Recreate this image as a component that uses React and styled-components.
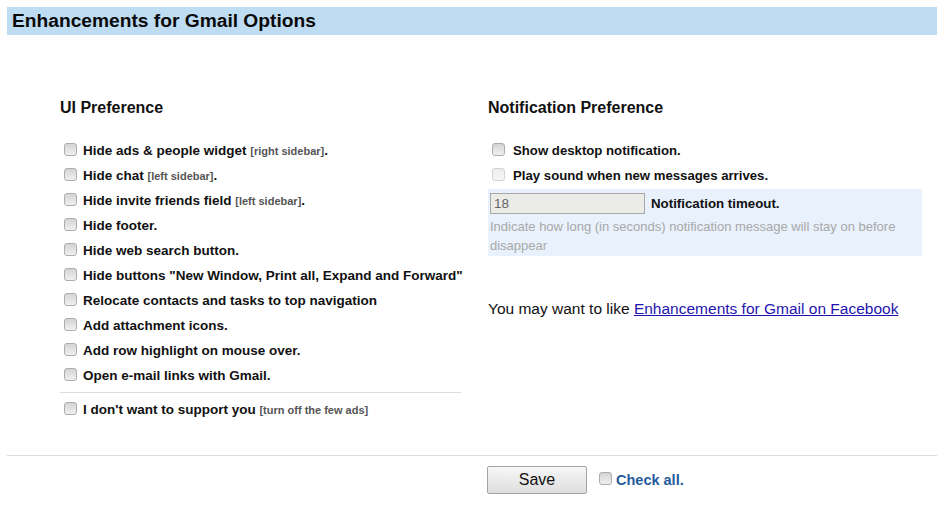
import React from "react";
import styled, { createGlobalStyle } from "styled-components";

const Global = createGlobalStyle`
  html, body { margin: 0; padding: 0; background: #fff; }
  body { font-family: "Liberation Sans", Arial, sans-serif; color: #111; }
`;

const Page = styled.div`
  padding: 7px 0 0 7px;
  width: 930px;
`;

const Header = styled.h1`
  margin: 0;
  height: 28px;
  background: #bedcf2;
  display: flex;
  align-items: center;
  padding-left: 5px;
  font-size: 19.2px;
  font-weight: bold;
  color: #0a0a0a;
`;

const Columns = styled.div`
  display: flex;
  padding: 63px 0 0 53px;
  gap: 27px;
`;

const Column = styled.div`
  width: ${(p) => p.$w}px;
  display: flex;
  flex-direction: column;
`;

const Heading = styled.h2`
  margin: 0 0 21px;
  font-size: 16px;
  line-height: 19px;
  font-weight: bold;
  color: #111;
`;

const Row = styled.label`
  display: flex;
  align-items: center;
  height: 25px;
  font-size: ${(p) => p.$size || 13.5}px;
  font-weight: bold;
  color: #111;
  gap: ${(p) => p.$gap || 6}px;
  white-space: nowrap;
`;

const Check = styled.input.attrs({ type: "checkbox" })`
  appearance: none;
  -webkit-appearance: none;
  width: 13px;
  height: 13px;
  margin: 0 0 3px 4px;
  border: 1px solid #adadad;
  border-radius: 3px;
  background: linear-gradient(#d4d4d4, #f0f0f0);
  box-sizing: border-box;
  flex: none;
  &:disabled {
    border-color: #d2d2d2;
    background: linear-gradient(#ececec, #f7f7f7);
  }
`;

const Note = styled.span`
  font-size: 11px;
  color: #555;
`;

const Rule = styled.hr`
  border: 0;
  border-top: 1px solid #dcdcdc;
  margin: 4px 0 4px;
  width: 401px;
`;

const TimeoutBox = styled.div`
  margin-top: 1px;
  background: #e8f1fc;
  padding: 4px 2px 1px;
`;

const TimeoutLine = styled.div`
  display: flex;
  align-items: center;
  gap: 6px;
  font-size: 13.3px;
  font-weight: bold;
`;

const NumberInput = styled.input`
  width: 155px;
  height: 21px;
  box-sizing: border-box;
  border: 1px solid #a9a9a9;
  background: #ebebe8;
  color: #666;
  font-family: "Liberation Sans", Arial, sans-serif;
  font-size: 13.5px;
  padding: 0 3px;
  margin: 0;
`;

const Hint = styled.p`
  margin: 3px 0 0;
  font-size: 13px;
  line-height: 19px;
  color: #a8a8a8;
`;

const Promo = styled.p`
  margin: 44px 0 0;
  font-size: 15.5px;
  line-height: 18px;
  color: #111;
`;

const Link = styled.a`
  color: #1f14b0;
  text-decoration: underline;
`;

const Footer = styled.div`
  margin-top: 33px;
  border-top: 1px solid #dcdcdc;
  display: flex;
  align-items: center;
  padding: 10px 0 0 480px;
  gap: 6px;
`;

const SaveButton = styled.button`
  width: 100px;
  height: 28px;
  border: 1px solid #a3a3a3;
  border-radius: 2px;
  background: linear-gradient(#f7f7f7, #dedede);
  font-family: "Liberation Sans", Arial, sans-serif;
  font-size: 16px;
  color: #111;
  margin-right: 2px;
`;

const CheckAll = styled.label`
  display: flex;
  align-items: center;
  gap: 4px;
  font-size: 14.5px;
  font-weight: bold;
  color: #1f5c9c;
`;

const uiItems = [
  ["Hide ads & people widget ", "[right sidebar]", "."],
  ["Hide chat ", "[left sidebar]", "."],
  ["Hide invite friends field ", "[left sidebar]", "."],
  ["Hide footer."],
  ["Hide web search button."],
  ['Hide buttons "New Window, Print all, Expand and Forward"'],
  ["Relocate contacts and tasks to top navigation"],
  ["Add attachment icons."],
  ["Add row highlight on mouse over."],
  ["Open e-mail links with Gmail."],
];

export default function App() {
  return (
    <Page>
      <Global />
      <Header>Enhancements for Gmail Options</Header>
      <Columns>
        <Column $w={401}>
          <Heading>UI Preference</Heading>
          {uiItems.map(([text, note, tail], i) => (
            <Row key={i}>
              <Check />
              <span>
                {text}
                {note && <Note>{note}</Note>}
                {tail}
              </span>
            </Row>
          ))}
          <Rule />
          <Row>
            <Check />
            <span>
              I don't want to support you <Note>[turn off the few ads]</Note>
            </span>
          </Row>
        </Column>
        <Column $w={434}>
          <Heading>Notification Preference</Heading>
          <Row $gap={8} $size={13.2}>
            <Check />
            <span>Show desktop notification.</span>
          </Row>
          <Row $gap={8} $size={13.2}>
            <Check disabled />
            <span>Play sound when new messages arrives.</span>
          </Row>
          <TimeoutBox>
            <TimeoutLine>
              <NumberInput defaultValue="18" disabled />
              <span>Notification timeout.</span>
            </TimeoutLine>
            <Hint>
              Indicate how long (in seconds) notification message will stay on
              before disappear
            </Hint>
          </TimeoutBox>
          <Promo>
            You may want to like{" "}
            <Link href="#">Enhancements for Gmail on Facebook</Link>
          </Promo>
        </Column>
      </Columns>
      <Footer>
        <SaveButton>Save</SaveButton>
        <CheckAll>
          <Check />
          <span>Check all.</span>
        </CheckAll>
      </Footer>
    </Page>
  );
}
